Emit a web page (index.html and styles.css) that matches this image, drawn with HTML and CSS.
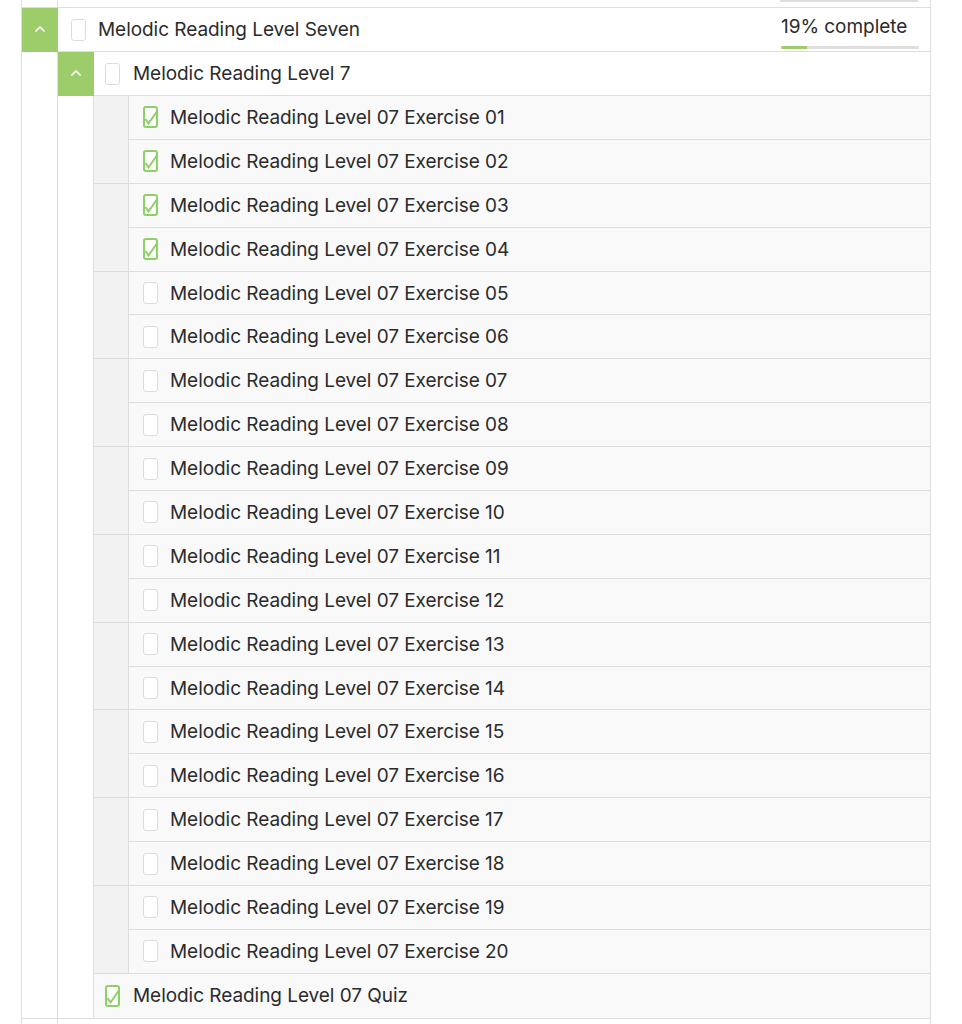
FILE: index.html
```html
<!DOCTYPE html>
<html lang="en">
<head>
  <meta charset="UTF-8">
  <meta name="viewport" content="width=device-width, initial-scale=1.0">
  <title>Melodic Reading Level Seven</title>
  <link rel="stylesheet" href="styles.css">
</head>
<body>
  <div class="course">
    <!-- end of the previous section -->
    <div class="stub stub-top">
      <div class="stub-toggle"></div>
      <div class="stub-main"><div class="stub-bar"></div></div>
    </div>

    <div class="section">
      <div class="section-head">
        <div class="toggle">
          <svg width="12" height="8" viewBox="0 0 12 8"><polyline points="1.5,6.5 6,2 10.5,6.5" fill="none" stroke="#fff" stroke-width="1.6"/></svg>
        </div>
        <div class="head-main level-1">
          <span class="check"></span>
          <span class="title">Melodic Reading Level Seven</span>
          <div class="progress">
            <div class="progress-label">19% complete</div>
            <div class="progress-track"><div class="progress-fill" style="width: 19%"></div></div>
          </div>
        </div>
      </div>

      <div class="section-body">
        <div class="indent"></div>
        <div class="children">
          <div class="topic-head">
            <div class="toggle">
              <svg width="12" height="8" viewBox="0 0 12 8"><polyline points="1.5,6.5 6,2 10.5,6.5" fill="none" stroke="#fff" stroke-width="1.6"/></svg>
            </div>
            <div class="head-main level-2">
              <span class="check"></span>
              <span class="title">Melodic Reading Level 7</span>
            </div>
          </div>

          <div class="section-body">
            <div class="indent"></div>
            <div class="children">
              <div class="lessons" id="lessons"></div>
              <div class="quiz-row">
                <span class="check done">
                  <svg width="15" height="22" viewBox="0 0 15 22"><polyline points="2.5,13 5.5,17.5 13.5,6" fill="none" stroke="#8fcf69" stroke-width="2"/></svg>
                </span>
                <span class="title">Melodic Reading Level 07 Quiz</span>
              </div>
            </div>
          </div>
        </div>
      </div>
    </div>

    <!-- start of the next section -->
    <div class="stub stub-bottom">
      <div class="stub-toggle"></div>
      <div class="stub-main"></div>
    </div>
  </div>

  <script>
    const lessons = document.getElementById('lessons');
    const doneCount = 4;

    for (let i = 1; i <= 20; i++) {
      const num = String(i).padStart(2, '0');
      const done = i <= doneCount;
      const row = document.createElement('div');
      row.className = 'lesson-row';
      row.innerHTML = `
        <div class="lesson-gutter"></div>
        <div class="lesson-main">
          <span class="check${done ? ' done' : ''}">
            ${done ? '<svg width="15" height="22" viewBox="0 0 15 22"><polyline points="2.5,13 5.5,17.5 13.5,6" fill="none" stroke="#8fcf69" stroke-width="2"/></svg>' : ''}
          </span>
          <span class="title">Melodic Reading Level 07 Exercise ${num}</span>
        </div>
      `;
      lessons.appendChild(row);
    }
  </script>
</body>
</html>
```

FILE: styles.css
```css
* { box-sizing: border-box; }
body { margin: 0; padding: 0; background: #fff; font-family: Inter, "Open Sans", Arial, sans-serif; color: #2b2b2b; }

.course { margin-left: 21px; width: 910px; border-left: 1px solid #dddddd; border-right: 1px solid #dddddd; }

.stub { display: flex; }
.stub-top { height: 8px; border-bottom: 1px solid #dddddd; }
.stub-bottom { height: 10px; border-top: 1px solid #dddddd; }
.stub-toggle { width: 36px; border-right: 1px solid #dddddd; }
.stub-main { flex: 1; }
.stub-bar { width: 138px; height: 2px; background: #dedede; margin-left: 722px; }

.section-head, .topic-head { display: flex; height: 44px; }
.toggle { width: 36px; background: #9dcd6b; display: flex; align-items: center; justify-content: center; }
.toggle svg { margin-top: -2px; }

.head-main { flex: 1; display: flex; align-items: center; border-bottom: 1px solid #dddddd; background: #fff; }
.level-1 { padding-left: 13px; }
.level-2 { padding-left: 11px; }

.check { width: 15px; height: 22px; border: 1.5px solid #dcdcdc; border-radius: 3px; background: #fff; flex-shrink: 0; position: relative; }
.check.done { border: 2px solid #8fcf69; }
.check svg { position: absolute; left: -2px; top: -2px; }

.title { font-size: 19px; margin-left: 12px; letter-spacing: -0.05px; }
.level-2 .title { margin-left: 13px; }

.progress { margin-left: auto; margin-right: 11px; width: 138px; padding-top: 5px; }
.progress-label { font-size: 19px; line-height: 22px; letter-spacing: -0.05px; }
.progress-track { height: 3px; border-radius: 2px; background: #dedede; margin-top: 8px; overflow: hidden; }
.progress-fill { height: 100%; background: #9dcd6b; }

.section-body { display: flex; }
.indent { width: 36px; border-right: 1px solid #dddddd; flex-shrink: 0; }
.children { flex: 1; }

.lesson-row { display: flex; height: 43.9px; }
.lesson-gutter { width: 35px; background: #f2f2f2; border-right: 1px solid #dddddd; }
.lesson-row:nth-child(even) .lesson-gutter { border-bottom: 1px solid #dddddd; }
.lesson-main { flex: 1; display: flex; align-items: center; padding-left: 14px; background: #f9f9f9; border-bottom: 1px solid #dddddd; }

.quiz-row { height: 44px; display: flex; align-items: center; padding-left: 11px; background: #f9f9f9; }
.quiz-row .title { margin-left: 13px; }
```
